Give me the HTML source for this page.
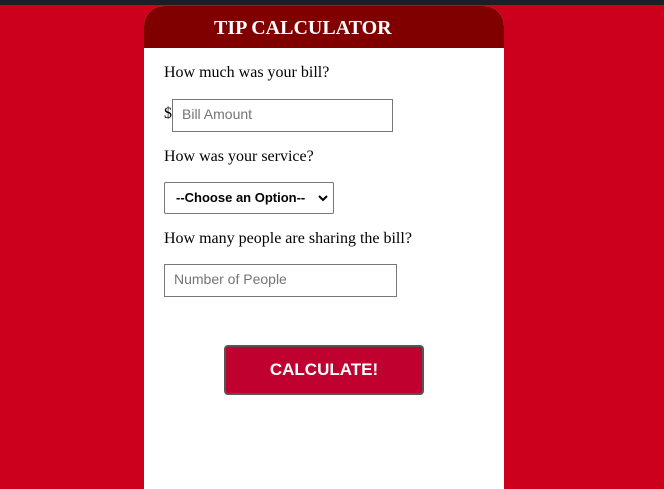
<!DOCTYPE html>
<html><head><style>
html,body{margin:0;width:664px;height:489px;overflow:hidden;}
body{background:#cc001c;position:relative;font-family:"Liberation Serif",serif;}
.top{position:absolute;left:0;top:0;width:664px;height:5px;background:#1e1f26;}
.box{position:absolute;left:144px;top:6px;width:360px;height:483px;background:#fff;border-radius:20px 20px 0 0;overflow:hidden;}
.hd{height:42px;background:#800000;color:#fff;font-weight:bold;font-size:20px;line-height:44px;padding-left:70px;}
.t{position:absolute;left:164px;font-size:16px;color:#000;}
.in{position:absolute;border:1px solid #767676;background:#fff;font-family:"Liberation Sans",sans-serif;font-size:14px;color:#757575;box-sizing:border-box;padding-left:9px;line-height:29px;}
.sel{position:absolute;left:164px;top:182px;width:170px;height:32px;border:1px solid #767676;border-radius:2px;box-sizing:border-box;font-family:"Liberation Sans",sans-serif;font-weight:bold;font-size:13px;line-height:29px;padding-left:11px;}
.btn{position:absolute;left:224px;top:345px;width:200px;height:50px;box-sizing:border-box;background:#c0002e;border:2px solid #555;border-radius:4px;color:#fff;font-family:"Liberation Sans",sans-serif;font-weight:bold;font-size:17px;text-align:center;line-height:46px;}
</style></head><body>
<div class="top"></div>
<div class="box"><div class="hd">TIP CALCULATOR</div></div>
<div class="t" style="top:64px">How much was your bill?</div>
<div class="t" style="top:105px">$</div>
<div class="in" style="left:172px;top:99px;width:221px;height:33px">Bill Amount</div>
<div class="t" style="top:148px">How was your service?</div>
<div class="sel">--Choose an Option--<svg style="position:absolute;right:5px;top:12px" width="10" height="7" viewBox="0 0 10 7"><path d="M1 1l4 4 4-4" stroke="#000" stroke-width="2" fill="none"/></svg></div>
<div class="t" style="top:230px">How many people are sharing the bill?</div>
<div class="in" style="left:164px;top:264px;width:233px;height:33px">Number of People</div>
<div class="btn">CALCULATE!</div>
</body></html>
